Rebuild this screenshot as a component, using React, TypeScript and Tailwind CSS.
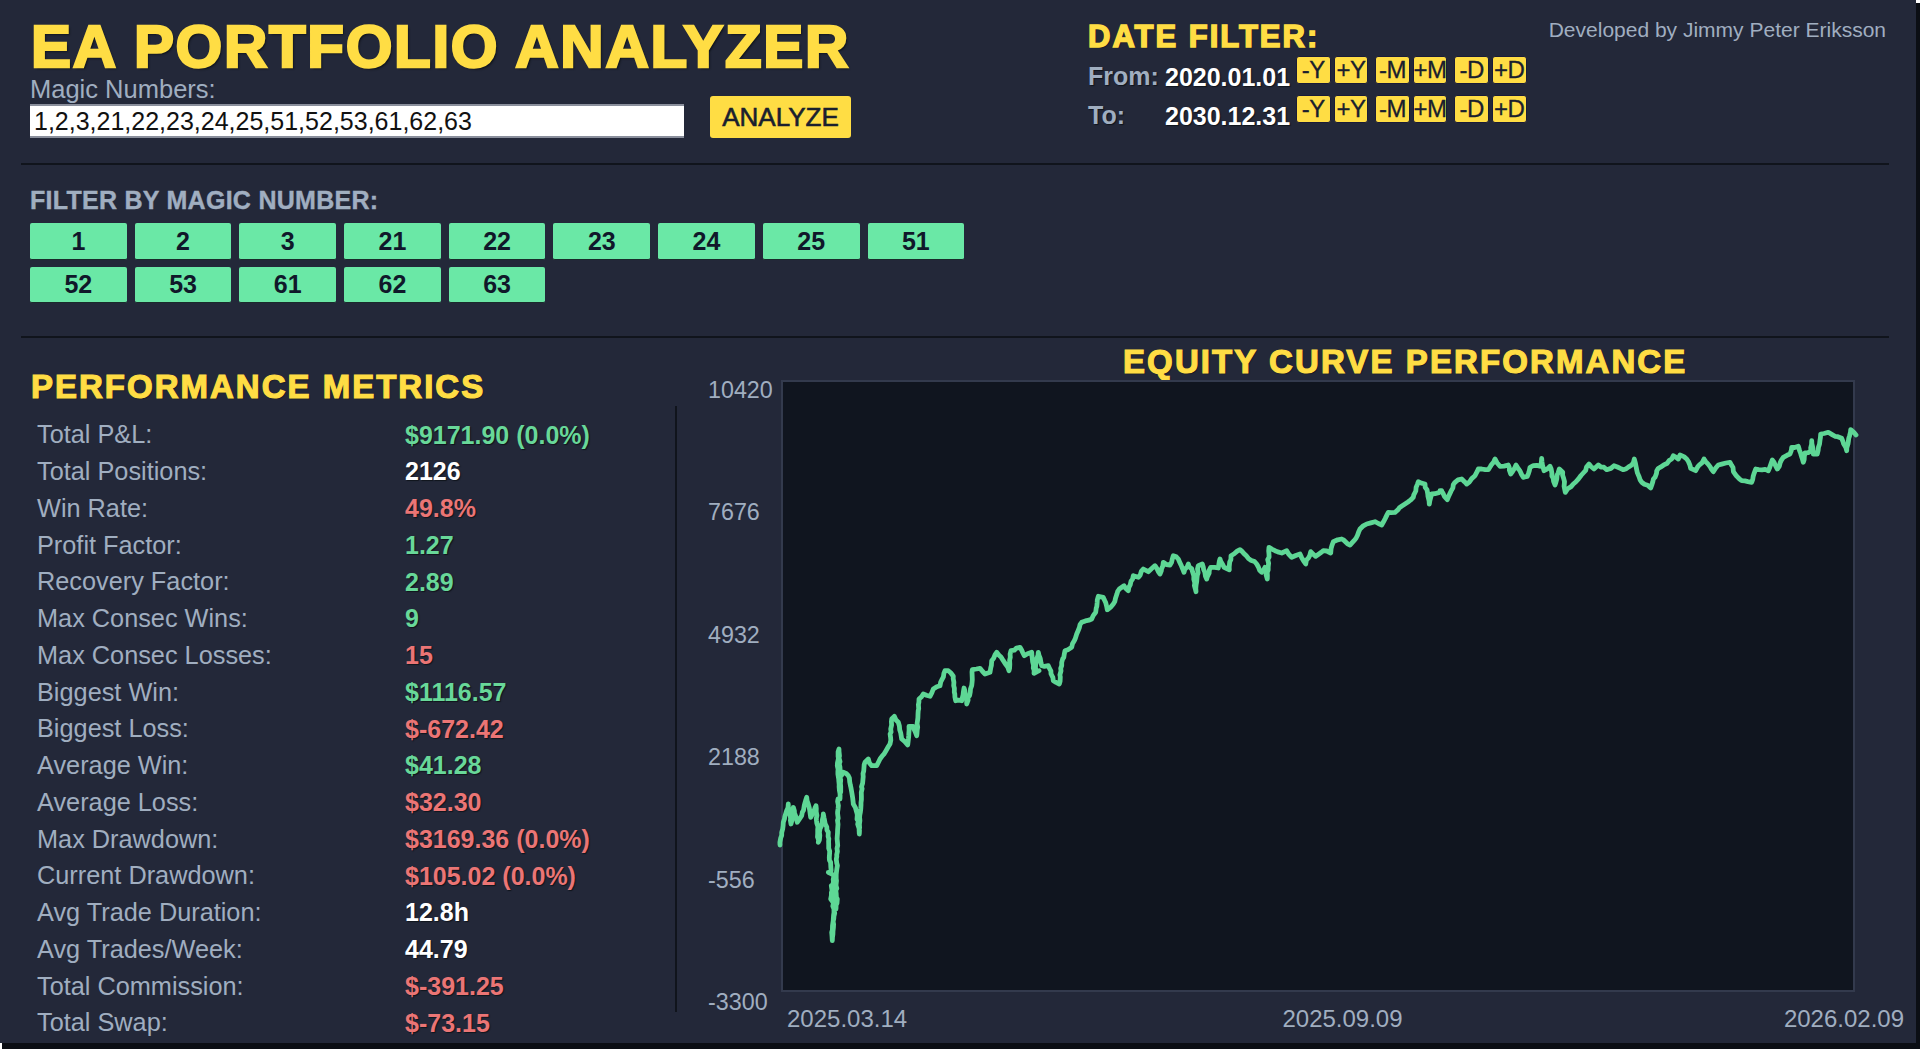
const magicRows = [
  ["1", "2", "3", "21", "22", "23", "24", "25", "51"],
  ["52", "53", "61", "62", "63"],
];

const GREEN = "text-[#68d899]";
const RED = "text-[#eb7575]";
const WHITE = "text-white";

const metrics = [
  ["Total P&L:", "$9171.90 (0.0%)", GREEN],
  ["Total Positions:", "2126", WHITE],
  ["Win Rate:", "49.8%", RED],
  ["Profit Factor:", "1.27", GREEN],
  ["Recovery Factor:", "2.89", GREEN],
  ["Max Consec Wins:", "9", GREEN],
  ["Max Consec Losses:", "15", RED],
  ["Biggest Win:", "$1116.57", GREEN],
  ["Biggest Loss:", "$-672.42", RED],
  ["Average Win:", "$41.28", GREEN],
  ["Average Loss:", "$32.30", RED],
  ["Max Drawdown:", "$3169.36 (0.0%)", RED],
  ["Current Drawdown:", "$105.02 (0.0%)", RED],
  ["Avg Trade Duration:", "12.8h", WHITE],
  ["Avg Trades/Week:", "44.79", WHITE],
  ["Total Commission:", "$-391.25", RED],
  ["Total Swap:", "$-73.15", RED],
];

const yLabels = ["10420", "7676", "4932", "2188", "-556", "-3300"];

// traced from crops: [crop x, crop y, scale 3] -> page px, then moved to plot origin
const PLOT_X = 783;
const PLOT_Y = 383;

const seg = (ox: number, oy: number, pts: number[]) => {
  const out: [number, number][] = [];
  for (let i = 0; i < pts.length; i += 2) {
    out.push([ox + pts[i] / 3 - PLOT_X, oy + pts[i + 1] / 3 - PLOT_Y]);
  }
  return out;
};

const traced = [
  ...seg(760, 700, [60, 438, 70, 370, 85, 315, 93, 375, 100, 325, 112, 370, 125, 350, 140, 295, 152, 355, 168, 320, 175, 430, 190, 345, 205, 400, 212, 520, 205, 520, 222, 530, 212, 600, 225, 620, 215, 700, 217, 725, 222, 640, 214, 560, 232, 600, 228, 630, 234, 300, 240, 300, 232, 200, 237, 150, 242, 280, 236, 240, 250, 220, 265, 230, 280, 315, 290, 340, 298, 405, 304, 280, 315, 190, 325, 180, 335, 200, 350, 200, 360, 180, 378, 155]),
  ...seg(840, 620, [150, 375, 155, 300, 163, 292, 175, 310, 185, 360, 203, 378, 207, 322, 220, 322, 230, 350, 237, 240, 250, 225, 270, 232, 280, 210, 300, 200, 315, 155, 325, 155, 340, 172, 347, 245, 365, 245, 372, 207, 380, 255, 395, 200, 397, 152, 420, 148, 435, 165, 450, 160, 455, 125, 470, 100, 490, 125, 507, 155, 513, 95, 540, 85, 553, 110, 575, 100, 582, 163, 597, 155]),
  ...seg(1000, 400, [105, 820, 115, 760, 125, 800, 145, 800, 160, 845, 178, 855, 185, 790, 195, 755, 215, 745, 230, 705, 245, 670, 275, 660, 287, 640, 295, 592, 310, 595, 322, 632, 340, 615, 358, 570, 372, 560, 385, 575, 400, 530, 415, 535, 430, 510, 445, 518, 465, 500, 480, 525, 490, 490, 510, 498, 520, 470, 535, 480, 552, 520, 565, 495, 578, 520, 588, 578, 595, 500, 607, 495, 620, 540, 632, 505, 655, 507, 660, 480, 672, 505, 688, 512, 693, 470, 720, 452, 745, 478, 770, 495, 785, 520, 795, 505, 802, 540, 807, 445, 825, 455, 845, 462, 860, 455, 875, 475, 900, 465, 917, 495, 932, 458, 947, 472, 970, 455, 992, 462, 1000, 428, 1025, 420, 1050, 438, 1062, 425, 1080, 390, 1100, 375, 1125, 368, 1145, 378, 1165, 340, 1185, 340, 1215, 315, 1240, 295, 1255, 248, 1275, 255, 1288, 315, 1295, 285, 1325, 275]),
  ...seg(1440, 380, [0, 335, 22, 362, 45, 310, 65, 300, 80, 315, 105, 290, 115, 270, 145, 272, 165, 240, 180, 262, 205, 258, 212, 285, 228, 258, 250, 295, 262, 292, 270, 265, 280, 260, 300, 262, 305, 238, 312, 275, 330, 262, 345, 318, 358, 270, 368, 280, 376, 340, 400, 315, 430, 282, 447, 255, 462, 270, 475, 258, 500, 272, 522, 260, 550, 272, 575, 258, 583, 240, 590, 272, 605, 310, 632, 327, 655, 268, 695, 240, 700, 230, 715, 240, 720, 228, 740, 240, 752, 268, 767, 275, 792, 240, 820, 278, 835, 258, 870, 250, 885, 285, 905, 305, 935, 310, 947, 270, 985, 275, 997, 243, 1012, 270, 1030, 235, 1050, 225, 1055, 205, 1075, 202, 1090, 250, 1095, 222, 1113, 215, 1115, 185, 1120, 225, 1132, 225, 1142, 165, 1165, 160, 1185, 172, 1205, 178, 1220, 215, 1232, 152, 1248, 168]),
];

// the source line is a dense tick series, so roughen the trace a little between points
const roughen = (pts: [number, number][]) => {
  const out: string[] = [];
  let seed = 7;
  const rnd = () => {
    seed = (seed * 16807) % 2147483647;
    return seed / 2147483647 - 0.5;
  };
  pts.forEach(([x, y], i) => {
    out.push(`${x.toFixed(1)},${y.toFixed(1)}`);
    const next = pts[i + 1];
    if (!next) return;
    const steps = Math.floor(Math.hypot(next[0] - x, next[1] - y) / 3);
    for (let s = 1; s < steps; s++) {
      const t = s / steps;
      out.push(`${(x + (next[0] - x) * t + rnd() * 1.2).toFixed(1)},${(y + (next[1] - y) * t + rnd() * 1.8).toFixed(1)}`);
    }
  });
  return out.join(" ");
};

const curve = roughen(traced);

function StepButtons() {
  const groups = [["-Y", "+Y"], ["-M", "+M"], ["-D", "+D"]];
  return (
    <div className="flex gap-[7px]">
      {groups.map((g) => (
        <div key={g[0]} className="flex gap-[3px]">
          {g.map((b) => (
            <button
              key={b}
              className="w-[34.6px] h-[28px] rounded-[3px] bg-[#ffdd44] border border-[#1a1c38] text-[#1a1f2e] text-[24px] tracking-[-0.5px] leading-[26px] [-webkit-text-stroke:0.3px_#1a1f2e] flex items-center justify-center"
            >
              {b}
            </button>
          ))}
        </div>
      ))}
    </div>
  );
}

function DateRow({ label, date, className }: { label: string; date: string; className: string }) {
  return (
    <div className={`flex items-start ${className}`}>
      <span className="w-[77px] mt-[5px] text-[25px] leading-[30px] font-bold text-[#a0aec0] [text-shadow:1px_1px_1px_#10141c]">{label}</span>
      <span className="w-[131px] mt-[6px] text-[25px] leading-[30px] font-bold text-white [text-shadow:1px_1px_1px_#10141c]">{date}</span>
      <StepButtons />
    </div>
  );
}

export default function App() {
  return (
    <div className="relative w-[1920px] h-[1049px] overflow-hidden bg-[#0b0e14] [font-family:'Liberation_Sans',Arial,sans-serif]">
      <div className="absolute top-0 right-0 w-[4px] h-[3px] bg-white" />
      <div className="absolute bottom-0 left-0 w-[2px] h-[6px] bg-white" />
      <div className="w-[1916px] h-[1043px] bg-[#232839] px-[21px] overflow-hidden">
        {/* header */}
        <div className="flex h-[165px] border-b-2 border-[#10141c] pl-[9px] w-[1868px]">
          <div className="w-[1058px] shrink-0">
            <h1 className="pt-[20px] pl-px text-[60px] leading-[54px] font-bold text-[#ffdd44] [-webkit-text-stroke:2.5px_#ffdd44] [text-shadow:2px_2px_2px_#10141c] tracking-[1.7px]">
              EA PORTFOLIO ANALYZER
            </h1>
            <div className="flex items-end">
              <div className="w-[680px] shrink-0">
                <div className="text-[25.5px] leading-[30px] text-[#a0aec0]">Magic Numbers:</div>
                <input
                  readOnly
                  value="1,2,3,21,22,23,24,25,51,52,53,61,62,63"
                  className="block w-[654px] h-[34px] bg-white border-y-2 border-[#8a8f9c] px-[4px] text-[25px] leading-[30px] text-[#111] outline-none"
                />
              </div>
              <button className="w-[141px] h-[42px] rounded-[3px] bg-[#ffdd44] text-[#1a1f2e] text-[26px] leading-[30px] [-webkit-text-stroke:0.6px_#1a1f2e]">
                ANALYZE
              </button>
            </div>
          </div>
          <div className="flex-1">
            <div className="flex justify-between">
              <div className="mt-[20px] text-[31px] leading-[34px] font-bold text-[#ffdd44] [-webkit-text-stroke:1.5px_#ffdd44] tracking-[2px] [text-shadow:1px_1px_1px_#10141c]">
                DATE FILTER:
              </div>
              <div className="mt-[17px] text-[21px] leading-[26px] text-[#a0aec0] pr-[3px]">Developed by Jimmy Peter Eriksson</div>
            </div>
            <DateRow label="From:" date="2020.01.01" className="mt-[2px]" />
            <DateRow label="To:" date="2030.12.31" className="mt-[2.5px]" />
          </div>
        </div>

        {/* magic number filter */}
        <div className="h-[173px] border-b-2 border-[#10141c] pl-[9px] pt-[19.5px] w-[1868px]">
          <div className="text-[25px] leading-[30px] font-bold text-[#a0aec0] [-webkit-text-stroke:0.4px_#a0aec0] tracking-[0.27px]">FILTER BY MAGIC NUMBER:</div>
          <div className="mt-[8.5px] flex flex-col gap-[7px]">
            {magicRows.map((row) => (
              <div key={row[0]} className="flex gap-[8px]">
                {row.map((m) => (
                  <button
                    key={m}
                    className="w-[96.7px] h-[36.5px] rounded-[2px] bg-[#6ae8a6] border-b border-[#1a2b2c] text-[#10182a] text-[25px] leading-[30px] font-bold"
                  >
                    {m}
                  </button>
                ))}
              </div>
            ))}
          </div>
        </div>

        {/* metrics + chart */}
        <div className="flex">
          <div className="w-[687px] shrink-0">
            <h2 className="mt-[30px] pl-[10px] text-[33px] leading-[38px] font-bold text-[#ffdd44] [-webkit-text-stroke:1.2px_#ffdd44] tracking-[2px] whitespace-nowrap [text-shadow:1px_1px_1px_#10141c]">
              PERFORMANCE METRICS
            </h2>
            <div className="w-[656px] h-[606px] border-r-2 border-[#10141c] pl-[16px] pt-[11px]">
              {metrics.map(([label, value, color]) => (
                <div key={label} className="flex h-[36.75px] items-center w-[640px]">
                  <span className="w-[368px] shrink-0 text-[25.3px] text-[#a0aec0]">{label}</span>
                  <span className={`text-[25px] font-bold ${color} whitespace-nowrap [text-shadow:1px_1px_1px_#10141c]`}>{value}</span>
                </div>
              ))}
            </div>
          </div>

          <div className="flex-1 min-w-0">
            <h2 className="mt-[13px] pl-[415px] text-[33px] leading-[22px] font-bold text-[#ffdd44] [-webkit-text-stroke:1.2px_#ffdd44] tracking-[2.1px] whitespace-nowrap [text-shadow:1px_1px_1px_#10141c]">
              EQUITY CURVE PERFORMANCE
            </h2>
            <div className="flex">
              <div className="w-[73px] h-[642px] mt-[2px] shrink-0 flex flex-col justify-between text-[23.3px] leading-[30px] text-[#a0aec0]">
                {yLabels.map((y) => (
                  <div key={y}>{y}</div>
                ))}
              </div>
              <div className="w-[1123px] shrink-0 mt-[7px]">
                <div className="w-[1074px] h-[612px] bg-[#10151f] border-2 border-[#333a4d]">
                  <svg className="block overflow-visible" width="1070" height="608" viewBox="0 0 1070 608">
                    <polyline points={curve} fill="none" stroke="#5ed795" strokeWidth="4.8" strokeLinejoin="round" strokeLinecap="round" />
                  </svg>
                </div>
                <div className="flex justify-between pl-[6px] mt-[12px] text-[24px] leading-[30px] text-[#a0aec0]">
                  <span>2025.03.14</span>
                  <span className="mr-[6px]">2025.09.09</span>
                  <span>2026.02.09</span>
                </div>
              </div>
            </div>
          </div>
        </div>
      </div>
    </div>
  );
}
